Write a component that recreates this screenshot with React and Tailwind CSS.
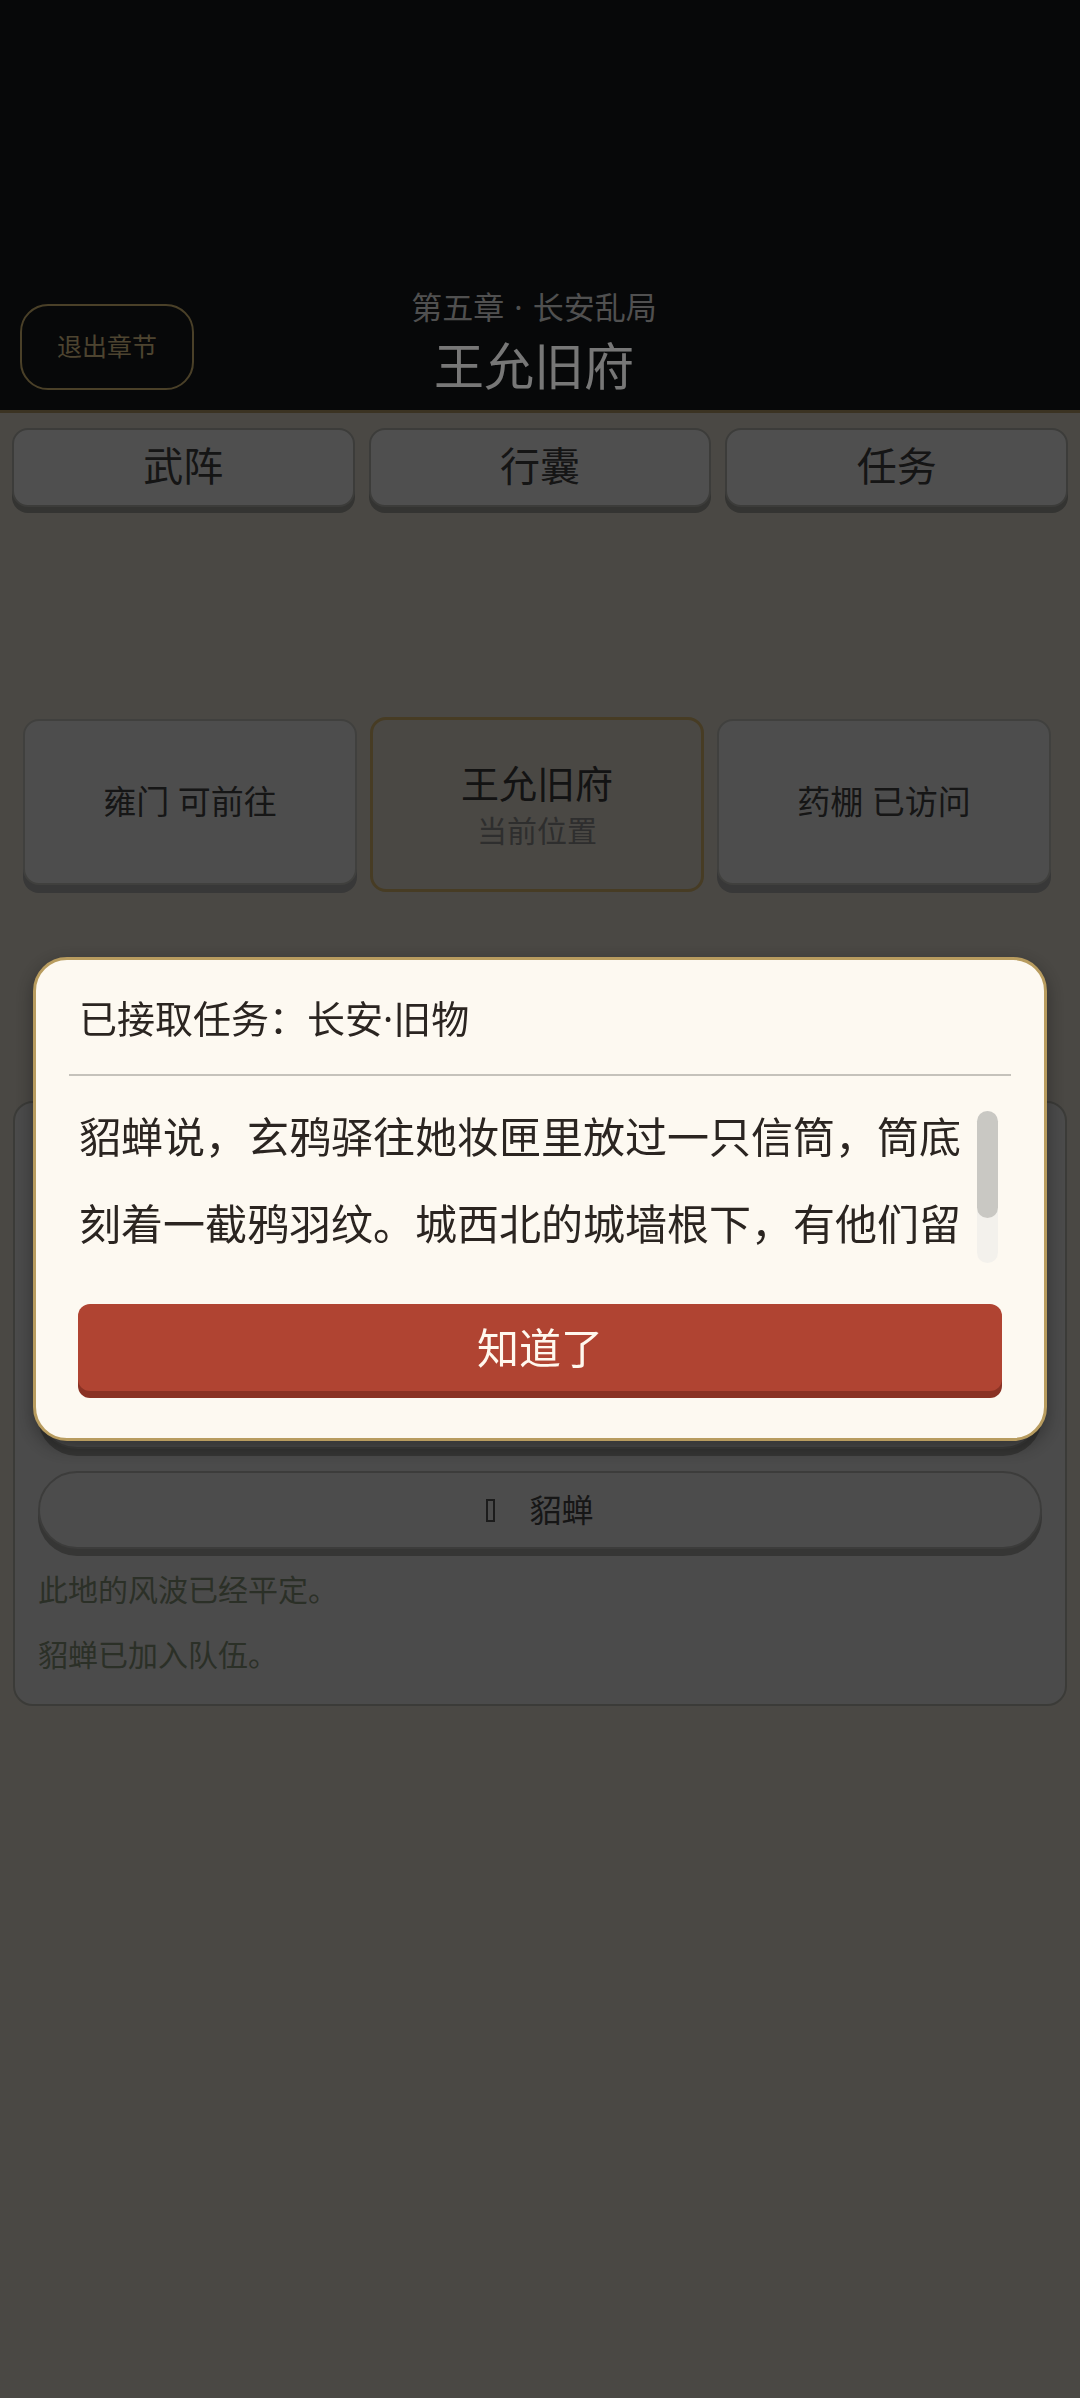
import { useState } from 'react'

const TABS = ['武阵', '行囊', '任务']

const LOGS = ['此地的风波已经平定。', '貂蝉已加入队伍。']

const QUEST_TEXT =
  '貂蝉说，玄鸦驿往她妆匣里放过一只信筒，筒底刻着一截鸦羽纹。城西北的城墙根下，有他们留下的暗记，若能寻到，便可顺藤摸瓜，找出那批旧物的下落。'

function PanelButton({ label }) {
  return (
    <button
      type="button"
      className="flex h-[78px] w-full items-center justify-center gap-[34px] rounded-[40px] border-2 border-[#787876] bg-[#989898] text-[32px] leading-none text-[#2c2c2c] shadow-[0_7px_0_#6c6c6a]"
    >
      <span className="inline-block h-[23px] w-[9px] border-2 border-[#383838]" />
      <span>{label}</span>
    </button>
  )
}

function QuestDialog({ onClose }) {
  return (
    <div className="fixed inset-0 z-20 flex items-center justify-center px-[33px]">
      <div className="w-full rounded-[34px] border-[3px] border-[#b89c5f] bg-[#fdf9f1] shadow-[0_6px_18px_rgba(0,0,0,0.35)]">
        <div className="px-[43px] pt-[36px] text-[38px] leading-[44px] text-[#2b2521]">
          已接取任务：长安·旧物
        </div>
        <div className="mx-[33px] mt-[34px] h-[2px] bg-[#c5c2bb]" />
        <div className="mt-[17px] flex pl-[43px]">
          <div className="h-[176px] w-[890px] overflow-hidden text-[42px] leading-[87px] text-[#2b2521]">
            {QUEST_TEXT}
          </div>
          <div className="ml-[8px] mt-[18px] h-[152px] w-[21px] rounded-full bg-[#f3f1ec]">
            <div className="h-[107px] w-full rounded-full bg-[#c9c8c3]" />
          </div>
        </div>
        <div className="px-[42px] pb-[47px] pt-[35px]">
          <button
            type="button"
            onClick={onClose}
            className="h-[87px] w-full rounded-[12px] bg-[#b04432] text-[42px] leading-none text-[#fff8ee] shadow-[0_7px_0_#8a3224]"
          >
            知道了
          </button>
        </div>
      </div>
    </div>
  )
}

export default function App() {
  const [open, setOpen] = useState(true)

  return (
    <div className="min-h-screen bg-[#949088] font-['Noto_Sans','Noto_Sans_CJK_SC',sans-serif]">
      <header className="grid h-[413px] grid-cols-[174px_1fr_186px] items-end border-b-[3px] border-[#766644] bg-[#0e1012] px-[20px] pb-[14px]">
        <button
          type="button"
          className="mb-[6px] h-[86px] rounded-[28px] border-2 border-[#948050] text-[25px] text-[#9a8860]"
        >
          退出章节
        </button>
        <div className="flex flex-col items-center">
          <div className="text-[31px] leading-[36px] text-[#a0a0a0]">
            第五章<span className="mx-[10px]">·</span>长安乱局
          </div>
          <div className="mt-[11px] text-[50px] leading-[60px] text-[#eeeeee]">王允旧府</div>
        </div>
        <div />
      </header>

      <nav className="mt-[15px] grid grid-cols-3 gap-[14px] px-[12px]">
        {TABS.map((t) => (
          <button
            key={t}
            type="button"
            className="h-[79px] rounded-[16px] border-2 border-[#787874] bg-[#9e9e9e] pb-[3px] text-[40px] leading-none text-[#2a2a2a] shadow-[0_6px_0_#686864]"
          >
            {t}
          </button>
        ))}
      </nav>

      <div className="mt-[212px] grid grid-cols-3 gap-[13px] pl-[23px] pr-[29px]">
        <div className="flex h-[166px] items-center justify-center rounded-[16px] border-2 border-[#80807c] bg-[#9a9a9a] text-[33px] text-[#2c2c2c] shadow-[0_8px_0_#707070]">
          雍门 可前往
        </div>
        <div className="-mt-[2px] flex h-[175px] flex-col items-center justify-center rounded-[16px] border-[3px] border-[#8e7848] bg-[#949088]">
          <div className="text-[38px] leading-[48px] text-[#262626]">王允旧府</div>
          <div className="mt-[4px] text-[30px] leading-[40px] text-[#5c5c5c]">当前位置</div>
        </div>
        <div className="flex h-[166px] items-center justify-center rounded-[16px] border-2 border-[#80807c] bg-[#9a9a9a] text-[33px] text-[#2c2c2c] shadow-[0_8px_0_#707070]">
          药棚 已访问
        </div>
      </div>

      <section className="mx-[13px] mt-[209px] rounded-[20px] border-2 border-[#767670] bg-[#969696] px-[23px] pb-[27px] pt-[24px]">
        <div className="text-[36px] leading-[56px] text-[#2c2c2c]">貂蝉</div>
        <div className="mt-[12px] text-[30px] leading-[48px] text-[#3a3a3a]">
          <p>“玄鸦驿的人，来过府上不止一回。”</p>
          <p>“他们留下的东西，我一直收着。”</p>
          <p>“将军若信得过我，我愿随你同去。”</p>
        </div>
        <div className="mt-[32px]">
          <PanelButton label="同行" />
        </div>
        <div className="mt-[22px]">
          <PanelButton label="貂蝉" />
        </div>
        <div className="mt-[19px] flex flex-col gap-[21px] text-[30px] leading-[44px] text-[#56604f]">
          {LOGS.map((l) => (
            <p key={l}>{l}</p>
          ))}
        </div>
      </section>

      {open && (
        <>
          <div className="fixed inset-0 z-10 bg-black/50" />
          <QuestDialog onClose={() => setOpen(false)} />
        </>
      )}
    </div>
  )
}
